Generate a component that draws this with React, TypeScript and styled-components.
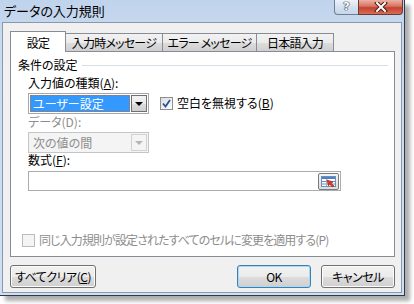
import styled, { createGlobalStyle } from "styled-components";

// Global page reset
const GlobalStyle = createGlobalStyle`
    html, body {
        margin: 0;
        padding: 0;
        background: #ffffff;
    }
    body {
        font-family: "Noto Sans CJK JP", "Noto Sans", sans-serif;
        font-size: 12px;
        font-feature-settings: "palt";
        color: #000000;
    }
`

////////////////////////////////////////////////////////
//////////////////   WINDOW FRAME   ////////////////////
////////////////////////////////////////////////////////
const Screen = styled.div`
    width: 414px;
    height: 304px;
    overflow: hidden;
`
const Window = styled.div`
    box-sizing: border-box;
    width: 405px;
    height: 296px;
    padding: 0 2px 2px 2px;
    background: linear-gradient(#bfd3ec, #cbdbef 40px, #cfdef0);
    border-right: 1px solid #2d3948;
    border-bottom: 1px solid #2d3948;
    box-shadow: 5px 5px 4px rgba(0, 0, 0, 0.32);
    display: flex;
    flex-direction: column;
`
const TitleBar = styled.div`
    height: 22px;
    margin: 0 -1px 0 -2px;
    display: flex;
    align-items: flex-start;
    justify-content: space-between;
`
const TitleText = styled.div`
    font-size: 13px;
    line-height: 22px;
    padding-left: 4px;
`
const TitleButtons = styled.div`
    display: flex;
    height: 15px;
`
const HelpButton = styled.div`
    width: 24px;
    height: 15px;
    box-sizing: border-box;
    border: 1px solid #6f7f94;
    border-top: none;
    border-right: none;
    border-radius: 0 0 0 4px;
    background: linear-gradient(#eef3fa, #d5e1f0 50%, #c6d5e9);
    color: #ffffff;
    font-family: "DejaVu Sans", sans-serif;
    font-weight: bold;
    font-size: 11px;
    line-height: 14px;
    text-align: center;
    text-shadow: 0 0 1px #3d4a5b, 0 0 1px #3d4a5b, 0 0 1px #3d4a5b, 0 0 1px #3d4a5b;
`
const CloseButton = styled.div`
    width: 45px;
    height: 15px;
    box-sizing: border-box;
    border: 1px solid #6e3b34;
    border-top: none;
    border-radius: 0 0 4px 0;
    background: linear-gradient(#eab3a6, #d9715f 45%, #c5412f 55%, #d66d55);
    display: flex;
    align-items: center;
    justify-content: center;
`
const Client = styled.div`
    flex: 1;
    box-sizing: border-box;
    background: #f0f0f0;
    border: 1px solid #8899ae;
    padding: 8px 6px 0 7px;
    display: flex;
    flex-direction: column;
`

////////////////////////////////////////////////////////
//////////////////   TABS   ////////////////////////////
////////////////////////////////////////////////////////
const TabRow = styled.div`
    height: 20px;
    display: flex;
    align-items: flex-end;
    position: relative;
    z-index: 1;
`
const Tab = styled.div<{ $active?: boolean; $w: number }>`
    box-sizing: border-box;
    width: ${props => props.$w}px;
    height: ${props => (props.$active ? 21 : 18)}px;
    margin-bottom: ${props => (props.$active ? -1 : 0)}px;
    margin-left: -1px;
    border: 1px solid #898c95;
    border-bottom: none;
    background: ${props => (props.$active ? "#ffffff" : "linear-gradient(#f2f2f2, #ebebeb 50%, #dddddd 51%, #cfcfcf)")};
    text-align: center;
    letter-spacing: -0.8px;
    line-height: ${props => (props.$active ? 20 : 17)}px;
    padding-top: ${props => (props.$active ? 1 : 0)}px;
    &:first-child {
        margin-left: 0;
    }
`
const Panel = styled.div`
    box-sizing: border-box;
    height: 206px;
    background: #ffffff;
    border: 1px solid #898c95;
    display: flex;
    flex-direction: column;
`
const GroupHeader = styled.div`
    display: flex;
    align-items: center;
    height: 14px;
    margin: 6px 6px 0 7px;
    line-height: 14px;
`
const GroupLine = styled.div`
    flex: 1;
    height: 1px;
    background: #d5dfe5;
    margin-left: 4px;
    margin-top: 1px;
`
const Fields = styled.div`
    padding-left: 17px;
    display: flex;
    flex-direction: column;
`
const Label = styled.div<{ $disabled?: boolean; $mt: number }>`
    height: 14px;
    line-height: 14px;
    margin-top: ${props => props.$mt}px;
    color: ${props => (props.$disabled ? "#8d8d8d" : "#000000")};
`
const ComboLine = styled.div<{ $mt: number }>`
    display: flex;
    align-items: flex-start;
    margin-top: ${props => props.$mt}px;
`
const Combo = styled.div<{ $disabled?: boolean }>`
    box-sizing: border-box;
    width: 121px;
    height: 21px;
    border: 1px solid ${props => (props.$disabled ? "#c2c5c9" : "#a4a8ae")};
    background: ${props => (props.$disabled ? "#f4f4f4" : "#ffffff")};
    display: flex;
    padding: 1px;
`
const ComboField = styled.div<{ $selected?: boolean }>`
    flex: 1;
    box-sizing: border-box;
    padding-left: 2px;
    line-height: 15px;
    color: ${props => (props.$selected ? "#ffffff" : "#8d8d8d")};
    background: ${props => (props.$selected ? "#3399ff" : "transparent")};
    border: 1px dotted ${props => (props.$selected ? "#c46f2a" : "transparent")};
`
const ComboButton = styled.div<{ $disabled?: boolean }>`
    box-sizing: border-box;
    width: 16px;
    margin-left: 1px;
    border: 1px solid ${props => (props.$disabled ? "#d0d3d6" : "#707070")};
    background: ${props => (props.$disabled ? "#f4f4f4" : "linear-gradient(#f2f2f2, #ebebeb 50%, #dddddd 51%, #cfcfcf)")};
    display: flex;
    align-items: center;
    justify-content: center;
`
const Arrow = styled.div<{ $disabled?: boolean }>`
    width: 0;
    height: 0;
    border-left: 4px solid transparent;
    border-right: 4px solid transparent;
    border-top: 4px solid ${props => (props.$disabled ? "#b5b5b5" : "#000000")};
`
const CheckRow = styled.label<{ $ml?: number; $mt?: number; $disabled?: boolean; $tight?: boolean }>`
    display: flex;
    align-items: center;
    height: 14px;
    margin-left: ${props => props.$ml || 0}px;
    margin-top: ${props => props.$mt || 0}px;
    color: ${props => (props.$disabled ? "#8d8d8d" : "#000000")};
    letter-spacing: ${props => (props.$tight ? "-0.9px" : "0")};
    line-height: 14px;
`
const Box = styled.div<{ $disabled?: boolean }>`
    box-sizing: border-box;
    width: 13px;
    height: 13px;
    border: 1px solid ${props => (props.$disabled ? "#bcbcbc" : "#8f8f8f")};
    background: ${props => (props.$disabled ? "#f4f4f4" : "linear-gradient(135deg, #dcdcdc, #ffffff)")};
    margin-right: 4px;
    display: flex;
    align-items: center;
    justify-content: center;
`
const FormulaInput = styled.div`
    box-sizing: border-box;
    width: 313px;
    height: 20px;
    margin-top: 4px;
    border: 1px solid #a9acb1;
    background: #ffffff;
    display: flex;
    justify-content: flex-end;
    align-items: center;
    padding-right: 1px;
`
const RefButton = styled.div`
    box-sizing: border-box;
    width: 21px;
    height: 17px;
    border: 1px solid #7a7a7a;
    border-radius: 2px;
    background: linear-gradient(#f5f5f5, #dcdcdc);
    display: flex;
    align-items: center;
    justify-content: center;
`

////////////////////////////////////////////////////////
//////////////////   BOTTOM BUTTONS   //////////////////
////////////////////////////////////////////////////////
const ButtonRow = styled.div`
    display: flex;
    margin-top: 8px;
    width: 385px;
`
const Button = styled.div<{ $w: number; $default?: boolean }>`
    box-sizing: border-box;
    width: ${props => props.$w}px;
    height: 23px;
    border: 1px solid ${props => (props.$default ? "#3c7fb1" : "#707070")};
    border-radius: 3px;
    background: linear-gradient(#f2f2f2, #ebebeb 50%, #dddddd 51%, #cfcfcf);
    box-shadow: ${props => (props.$default ? "inset 0 0 0 1px #a9d9f7" : "inset 0 0 0 1px #fcfcfc")};
    text-align: center;
    letter-spacing: -0.5px;
    line-height: 21px;
`
const Spacer = styled.div`
    flex: 1;
`
const ButtonGap = styled.div`
    width: 10px;
`

////////////////////////////////////////////////////////
//////////////////   ICONS   ///////////////////////////
////////////////////////////////////////////////////////
const CloseGlyph = () => (
    <svg width="14" height="10" viewBox="0 0 14 10">
        <path d="M3 1 L11 9 M11 1 L3 9" stroke="#4a1f1a" strokeWidth="4" strokeLinecap="square" />
        <path d="M3 1 L11 9 M11 1 L3 9" stroke="#ffffff" strokeWidth="2" strokeLinecap="square" />
    </svg>
)

const CheckGlyph = () => (
    <svg width="9" height="9" viewBox="0 0 9 9">
        <path d="M1 4.5 L3.5 7.5 L8 1" stroke="#2b4f9e" strokeWidth="1.8" fill="none" />
    </svg>
)

const RefGlyph = () => (
    <svg width="15" height="11" viewBox="0 0 15 11">
        <rect x="0.5" y="0.5" width="14" height="10" fill="#ffffff" stroke="#6d8fbf" />
        <rect x="1" y="1" width="13" height="2" fill="#4f7fc4" />
        <line x1="1" y1="5.5" x2="14" y2="5.5" stroke="#6d8fbf" />
        <line x1="1" y1="8" x2="14" y2="8" stroke="#6d8fbf" />
        <line x1="5.5" y1="3" x2="5.5" y2="10" stroke="#9fb5d8" />
        <path d="M6 4 L12 6 L10 7 L13 10 L11.5 11 L8.5 8 L7.5 10 Z" fill="#e0361e" stroke="#a81c0c" strokeWidth="0.6" />
    </svg>
)

////////////////////////////////////////////////////////////
//////////////////   MAIN COMPONENT   //////////////////////
////////////////////////////////////////////////////////////
const App = () => {
    return (
        <>
            <GlobalStyle />
            <Screen>
                <Window>
                    <TitleBar>
                        <TitleText>データの入力規則</TitleText>
                        <TitleButtons>
                            <HelpButton>?</HelpButton>
                            <CloseButton>
                                <CloseGlyph />
                            </CloseButton>
                        </TitleButtons>
                    </TitleBar>
                    <Client>
                        <TabRow>
                            <Tab $active $w={56}>設定</Tab>
                            <Tab $w={98}>入力時メッセージ</Tab>
                            <Tab $w={95}>エラー メッセージ</Tab>
                            <Tab $w={78}>日本語入力</Tab>
                        </TabRow>
                        <Panel>
                            <GroupHeader>
                                条件の設定
                                <GroupLine />
                            </GroupHeader>
                            <Fields>
                                <Label $mt={4}>入力値の種類(<u>A</u>):</Label>
                                <ComboLine $mt={3}>
                                    <Combo>
                                        <ComboField $selected>ユーザー設定</ComboField>
                                        <ComboButton>
                                            <Arrow />
                                        </ComboButton>
                                    </Combo>
                                    <CheckRow $ml={11} $mt={3}>
                                        <Box>
                                            <CheckGlyph />
                                        </Box>
                                        空白を無視する(<u>B</u>)
                                    </CheckRow>
                                </ComboLine>
                                <Label $mt={1} $disabled>データ(D):</Label>
                                <ComboLine $mt={3}>
                                    <Combo $disabled>
                                        <ComboField>次の値の間</ComboField>
                                        <ComboButton $disabled>
                                            <Arrow $disabled />
                                        </ComboButton>
                                    </Combo>
                                </ComboLine>
                                <Label $mt={0}>数式(<u>F</u>):</Label>
                                <FormulaInput>
                                    <RefButton>
                                        <RefGlyph />
                                    </RefButton>
                                </FormulaInput>
                            </Fields>
                            <CheckRow $ml={11} $mt={42} $disabled $tight>
                                <Box $disabled />
                                同じ入力規則が設定されたすべてのセルに変更を適用する(P)
                            </CheckRow>
                        </Panel>
                        <ButtonRow>
                            <Button $w={86}>すべてクリア(<u>C</u>)</Button>
                            <Spacer />
                            <Button $w={74} $default>OK</Button>
                            <ButtonGap />
                            <Button $w={74}>キャンセル</Button>
                        </ButtonRow>
                    </Client>
                </Window>
            </Screen>
        </>
    )
}

export default App;
